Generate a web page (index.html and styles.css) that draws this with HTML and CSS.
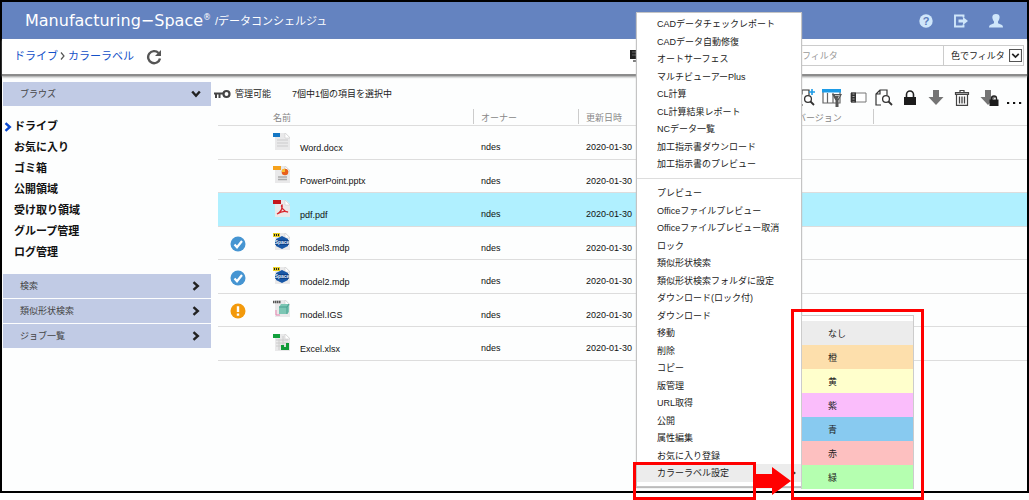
FILE: index.html
```html
<!DOCTYPE html>
<html lang="ja">
<head>
<meta charset="utf-8">
<title>Manufacturing−Space データコンシェルジュ</title>
<link rel="stylesheet" href="styles.css">
</head>
<body>
<svg class="defs" aria-hidden="true">
  <symbol id="page" viewBox="0 0 18 18">
    <path d="M2 1h11l4 4v13H2z" fill="#e9e9ea"/>
    <path d="M12 1v5h5z" fill="#fff" stroke="#cfcfcf" stroke-width=".6"/>
  </symbol>
  <symbol id="chev" viewBox="0 0 8 10"><path d="M1.5 1.2 5.8 5 1.5 8.8" fill="none" stroke="currentColor" stroke-width="2.4"/></symbol>
  <symbol id="mdp" viewBox="0 0 18 18">
    <use href="#page"/>
    <path d="M0 1h7v4H0z" fill="#e8cf20"/><path d="M1 3h1M3 3h1M5 3h1" stroke="#222" stroke-width="2"/>
    <path d="m9 4 6 3v7l-6 3-6-3V7z" fill="#1757a6"/>
    <path d="M2 10.5h14" stroke="#0b3b80" stroke-width="4.500"/>
    <text x="9" y="12" text-anchor="middle" font-size="5" font-weight="bold" fill="#e4f0ff">Space</text>
  </symbol>
  <symbol id="ok" viewBox="0 0 16 16">
    <circle cx="8" cy="8" r="7.500" fill="#4695d2"/><path d="m4.500 8.500 2.500 2.700 5-6.200" fill="none" stroke="#fff" stroke-width="2.200"/>
  </symbol>
  <symbol id="arrow" viewBox="0 0 18 18"><path d="M6 1h6v7h4.500L9 16 1.500 8H6z" fill="#757575"/></symbol>
  <symbol id="lock" viewBox="0 0 18 18"><path d="M5.500 8V5.500a3.500 3.500 0 0 1 7 0V8" fill="none" stroke="#222" stroke-width="1.600"/><path d="M3 8h12v8H3z" fill="#1c1c1c"/></symbol>
  <symbol id="docsearch" viewBox="0 0 18 18">
    <path d="M6 16H1V5l4-4h7v5M5 1v4H1" fill="none" stroke="#333" stroke-width="1.200"/>
    <circle cx="11" cy="10" r="3.400" fill="#fff" stroke="#333" stroke-width="1.300"/><path d="m13.500 12.500 3.500 3.500" stroke="#333" stroke-width="1.800"/>
  </symbol>
</svg>

<div class="frame">
  <header class="top">
    <h1 class="brand">Manufacturing−Space<sup>®</sup></h1>
    <span class="product">/データコンシェルジュ</span>
    <nav class="top-actions">
      <button type="button" aria-label="ヘルプ"><svg viewBox="0 0 14 14"><circle cx="7" cy="7" r="6.700" fill="#cfe6fa"/><text x="7" y="11" text-anchor="middle" font-size="11" font-weight="bold" fill="#5b7cba">?</text></svg></button>
      <button type="button" aria-label="ログアウト"><svg viewBox="0 0 14 14"><path d="M9.500 3.500V1.500H1v11h8.500v-2" fill="none" stroke="#cfe6fa" stroke-width="1.900"/><path d="M4.500 5.500H9V3l5 4-5 4V8.500H4.500z" fill="#cfe6fa"/></svg></button>
      <button type="button" aria-label="ユーザー"><svg viewBox="0 0 14 14"><path d="M7 0c5 0 4 5 2 7.500v1.700L13 11q1 .6 1 2.500H0Q0 11.600 1 11l4-1.800V7.500C3 5 2 0 7 0z" fill="#cfe6fa"/></svg></button>
    </nav>
  </header>

  <div class="pathbar">
    <nav class="crumbs"><a href="#">ドライブ</a><svg viewBox="0 0 8 10"><path d="m2 1.500 3 3.500-3 3.500" fill="none" stroke="#555" stroke-width="1.200"/></svg><a href="#">カラーラベル</a></nav>
    <button class="reload" type="button" aria-label="更新"><svg viewBox="0 0 16 16"><path d="M12.500 4A6 6 0 1 0 14 9.500" fill="none" stroke="#555" stroke-width="2.400"/><path d="M15 1v6H9z" fill="#555"/></svg></button>
    <div class="filters">
      <button class="view" type="button" aria-label="表示"><svg viewBox="0 0 16 14"><path d="M0 1h16v9H0z" fill="#222"/><path d="M2 3h12M2 6h12" stroke="#666"/><path d="M3 12h10" stroke="#555" stroke-width="1.500"/></svg></button>
      <div class="filter-box">
        <input type="text" placeholder="フィルタ" aria-label="フィルタ">
        <span class="colour-filter"><select aria-label="色でフィルタ"><option>色でフィルタ</option></select><svg viewBox="0 0 12 12"><path d="M.5.500h11v11H.5z" fill="#fff" stroke="#555"/><path d="m3 4.500 3 3 3-3" fill="none" stroke="#222" stroke-width="1.600"/></svg></span>
      </div>
    </div>
  </div>

  <div class="body">
    <aside class="side">
      <button class="section" type="button">ブラウズ<svg class="down"><use href="#chev"/></svg></button>
      <ul class="browse">
        <li><svg class="here"><use href="#chev"/></svg><a href="#">ドライブ</a></li>
        <li><a href="#">お気に入り</a></li>
        <li><a href="#">ゴミ箱</a></li>
        <li><a href="#">公開領域</a></li>
        <li><a href="#">受け取り領域</a></li>
        <li><a href="#">グループ管理</a></li>
        <li><a href="#">ログ管理</a></li>
      </ul>
      <div class="sections">
        <button class="section" type="button">検索<svg><use href="#chev"/></svg></button>
        <button class="section" type="button">類似形状検索<svg><use href="#chev"/></svg></button>
        <button class="section" type="button">ジョブ一覧<svg><use href="#chev"/></svg></button>
      </div>
    </aside>

    <main class="main">
      <div class="tools">
        <svg class="key" viewBox="0 0 17 10"><circle cx="12.500" cy="5" r="3" fill="none" stroke="#444" stroke-width="2.200"/><path d="M0 4.500h10M2 4.500V9M5.500 4.500V9" stroke="#444" stroke-width="2"/></svg>
        <span class="perm">管理可能</span>
        <span class="count">7個中1個の項目を選択中</span>
        <div class="icons">
          <button type="button" aria-label="検索追加"><svg><use href="#docsearch"/><path d="M12 3h6M15 0v6" stroke="#1c9be6" stroke-width="1.600"/></svg></button>
          <button type="button" aria-label="列フィルタ"><svg class="wide" viewBox="0 0 22 18"><path d="M2 2h17v12H2zM6.500 4v10M12 4v10" fill="#fff" stroke="#666" stroke-width="1.200"/><path d="M1 0h19v3.500H1z" fill="#1c9be6"/><path d="M11 5h10l-3.500 6.500V18h-3v-6.500z" fill="#555"/><path d="M14 6.500h4.500l-1.500 3" fill="none" stroke="#bbb"/></svg></button>
          <button type="button" aria-label="パネル"><svg><path d="M2 4h15v9H2z" fill="#fff" stroke="#777"/><path d="M2 3.500h5v10H2z" fill="#333"/><path d="M4.500 4.500v8" stroke="#aaa" stroke-dasharray="1 1.500" stroke-width="2"/></svg></button>
          <button type="button" aria-label="プレビュー"><svg><use href="#docsearch"/></svg></button>
          <button type="button" aria-label="ロック"><svg><use href="#lock"/></svg></button>
          <button type="button" aria-label="ダウンロード"><svg><use href="#arrow"/></svg></button>
          <button type="button" aria-label="削除"><svg><path d="M3.500 5h11v11.400h-11zM2.500 3.500h13v1.800h-13zM7 3.500V1.500h4v2" fill="#fff" stroke="#444" stroke-width="1.200"/><path d="M6.500 7.500v7M9 7.500v7M11.500 7.500v7" stroke="#444" stroke-width="1.300"/></svg></button>
          <button type="button" aria-label="ロック付ダウンロード"><svg class="wide" viewBox="-2 0 22 18"><use href="#arrow" width="18" height="18"/><path d="M12.500 11V9.500a2.500 2.500 0 0 1 5 0V11" fill="none" stroke="#222" stroke-width="1.400"/><path d="M10.500 10.500h9V17h-9z" fill="#1c1c1c"/></svg></button>
          <button type="button" aria-label="その他"><svg><path d="M2 14h2.200M8 14h2.200M14 14h2.200" stroke="#111" stroke-width="2"/></svg></button>
        </div>
      </div>

      <table class="files">
        <colgroup><col class="c-state"><col class="c-name"><col class="c-owner"><col class="c-date"><col class="c-ver"><col></colgroup>
        <thead><tr><th></th><th>名前</th><th class="sep">オーナー</th><th class="sep">更新日時</th><th class="sep">バージョン</th><th class="sep"></th></tr></thead>
        <tbody>
          <tr><td></td><td><div class="file"><svg><use href="#page"/><path d="M0 1h7v4H0z" fill="#1477c4"/><path d="M4 8h11M4 11h11M4 14h11" stroke="#ccc" stroke-width="1.200"/></svg>Word.docx</div></td><td>ndes</td><td>2020-01-30</td><td></td><td></td></tr>
          <tr><td></td><td><div class="file"><svg><use href="#page"/><path d="M0 1h8v4H0z" fill="#f6a21c"/><circle cx="12" cy="7" r="3.300" fill="#e8601c"/><path d="M12 7V3.700A3.300 3.300 0 0 0 8.700 7z" fill="#f8c030"/><path d="M5 12h9M5 14.500h9" stroke="#aaa" stroke-width="1.400"/></svg>PowerPoint.pptx</div></td><td>ndes</td><td>2020-01-30</td><td></td><td></td></tr>
          <tr class="selected"><td></td><td><div class="file"><svg><use href="#page"/><path d="M0 1h8v4H0z" fill="#c4161c"/><path d="M4 15c4-2 6-6 5-9-2 1 2 7 6 7-4-1.500-8 0-11 2z" fill="none" stroke="#d8262c" stroke-width="1.300"/></svg>pdf.pdf</div></td><td>ndes</td><td>2020-01-30</td><td></td><td></td></tr>
          <tr><td><svg class="state" role="img" aria-label="完了"><use href="#ok"/></svg></td><td><div class="file"><svg><use href="#mdp"/></svg>model3.mdp</div></td><td>ndes</td><td>2020-01-30</td><td></td><td></td></tr>
          <tr><td><svg class="state" role="img" aria-label="完了"><use href="#ok"/></svg></td><td><div class="file"><svg><use href="#mdp"/></svg>model2.mdp</div></td><td>ndes</td><td>2020-01-30</td><td></td><td></td></tr>
          <tr><td><svg class="state" role="img" aria-label="警告" viewBox="0 0 16 16"><circle cx="8" cy="8" r="7.500" fill="#f39a0c"/><path d="M8 3.200V9M8 10.500v2.200" stroke="#fff" stroke-width="2.400"/></svg></td><td><div class="file"><svg><use href="#page"/><path d="M0 3h8" stroke="#555" stroke-width="2.500" stroke-dasharray="1.500 .5"/><path d="M6 8l2-3h8v8l-2 2H6z" fill="#7cc6b4"/><path d="M6 8h8v7M14 8l2-3" fill="none" stroke="#48a090"/><path d="M3 11v5h4" fill="none" stroke="#e884b0"/></svg>model.IGS</div></td><td>ndes</td><td>2020-01-30</td><td></td><td></td></tr>
          <tr><td></td><td><div class="file"><svg><use href="#page"/><path d="M0 1h7v4H0z" fill="#12a03c"/><path d="M3 7h12M3 10h12M3 13h12M6 6v11M10 3v14" stroke="#ccc"/><path d="M8 17v-5h3v2h2v-4h3v7z" fill="#109a38"/></svg>Excel.xlsx</div></td><td>ndes</td><td>2020-01-30</td><td></td><td></td></tr>
        </tbody>
      </table>
    </main>
  </div>
</div>

<div class="menu" role="menu">
  <div class="group">
    <button type="button" role="menuitem">CADデータチェックレポート</button>
    <button type="button" role="menuitem">CADデータ自動修復</button>
    <button type="button" role="menuitem">オートサーフェス</button>
    <button type="button" role="menuitem">マルチビューアーPlus</button>
    <button type="button" role="menuitem">CL計算</button>
    <button type="button" role="menuitem">CL計算結果レポート</button>
    <button type="button" role="menuitem">NCデータ一覧</button>
    <button type="button" role="menuitem">加工指示書ダウンロード</button>
    <button type="button" role="menuitem">加工指示書のプレビュー</button>
  </div>
  <hr>
  <div class="group">
    <button type="button" role="menuitem">プレビュー</button>
    <button type="button" role="menuitem">Officeファイルプレビュー</button>
    <button type="button" role="menuitem">Officeファイルプレビュー取消</button>
    <button type="button" role="menuitem">ロック</button>
    <button type="button" role="menuitem">類似形状検索</button>
    <button type="button" role="menuitem">類似形状検索フォルダに設定</button>
    <button type="button" role="menuitem">ダウンロード(ロック付)</button>
    <button type="button" role="menuitem">ダウンロード</button>
    <button type="button" role="menuitem">移動</button>
    <button type="button" role="menuitem">削除</button>
    <button type="button" role="menuitem">コピー</button>
    <button type="button" role="menuitem">版管理</button>
    <button type="button" role="menuitem">URL取得</button>
    <button type="button" role="menuitem">公開</button>
    <button type="button" role="menuitem">属性編集</button>
    <button type="button" role="menuitem">お気に入り登録</button>
    <button type="button" role="menuitem" class="active">カラーラベル設定<svg viewBox="0 0 4 6"><path d="m0 0 4 3-4 3z" fill="#333"/></svg></button>
  </div>
</div>

<div class="submenu" role="menu">
  <button type="button" role="menuitem" class="none">なし</button>
  <button type="button" role="menuitem" class="orange">橙</button>
  <button type="button" role="menuitem" class="yellow">黄</button>
  <button type="button" role="menuitem" class="purple">紫</button>
  <button type="button" role="menuitem" class="blue">青</button>
  <button type="button" role="menuitem" class="red">赤</button>
  <button type="button" role="menuitem" class="green">緑</button>
</div>

<div class="mark mark-item"></div>
<svg class="mark-arrow" viewBox="0 0 36 28"><path d="M0 7h17V0l19 14-19 14v-7H0z" fill="#f00"/></svg>
<div class="mark mark-colours"></div>
</body>
</html>
```
FILE: styles.css
```css
* { box-sizing: border-box; }
body {
  margin: 0;
  min-height: 100vh;
  position: relative;
  background: #fff;
  color: #222;
  font: 9px/14px "Liberation Sans", "Noto Sans CJK JP", sans-serif;
}
button, input, select { font: inherit; color: inherit; background: none; border: 0; padding: 0; margin: 0; }
button { text-align: left; }
a { color: inherit; text-decoration: none; }
svg { display: block; flex: none; }
.defs { position: absolute; width: 0; height: 0; }

.frame { min-height: calc(100vh - 7px); border: 2px solid #000; background: #fdfefe; }

.top { display: flex; align-items: center; height: 37px; padding: 0 24px 0 23px; background: #6483c0; color: #fff; }
.brand { margin: 0; font: 16px/20px "DejaVu Sans", sans-serif; }
.brand sup { font-size: 8px; line-height: 0; vertical-align: 6px; }
.product { margin-left: 4px; font-size: 11px; line-height: 20px; }
.top-actions { display: flex; gap: 21px; margin-left: auto; }
.top-actions svg { width: 14px; height: 14px; }

.pathbar {
  display: flex; align-items: center; height: 37px; padding: 0 3px 2px 12px;
  background: #fff; border-bottom: 2px solid #8c8c8c; box-shadow: 0 1px 2px #999;
}
.crumbs { display: flex; align-items: center; gap: 1px; font-size: 11px; color: #1450c8; }
.crumbs svg { width: 8px; height: 10px; }
.reload { margin: 2px 0 0 12px; }
.reload svg { width: 16px; height: 16px; }
.filters { display: flex; align-items: center; gap: 145px; margin-left: auto; }
.view svg { width: 16px; height: 14px; }
.filter-box { display: flex; height: 21px; border: 1px solid #ccc; }
.filter-box input { width: 151px; padding-left: 10px; }
.filter-box input::placeholder { color: #999; opacity: 1; }
.colour-filter { display: flex; align-items: center; width: 80px; padding-left: 7px; border-left: 1px solid #ccc; position: relative; }
.colour-filter select { appearance: none; width: 100%; height: 100%; }
.colour-filter svg { position: absolute; right: 1px; width: 13px; height: 13px; pointer-events: none; }

.body { display: flex; }
.side { width: 208px; margin: 6px 0 0 1px; flex: none; }
.section {
  display: flex; align-items: center; justify-content: space-between;
  width: 100%; height: 24px; padding: 0 11px 0 17px; background: #c1cbe5; color: #444;
}
.section svg { width: 8px; height: 10px; color: #222; }
.section .down { transform: rotate(90deg); }
.browse { list-style: none; margin: 10px 0 11px; padding: 0 0 0 11px; font-size: 11px; font-weight: bold; color: #111; }
.browse li { height: 21px; line-height: 21px; position: relative; }
.browse .here { position: absolute; left: -10px; top: 6px; width: 8px; height: 10px; color: #0a48d0; }
.sections { display: grid; gap: 1px; }

.main { flex: 1; min-width: 0; margin-top: 6px; }
.tools { display: flex; align-items: center; height: 27px; padding: 0 0 3px 3px; }
.key { width: 17px; height: 10px; }
.perm { margin-left: 4px; white-space: nowrap; }
.count { margin-left: 21px; white-space: nowrap; }
.icons { display: flex; margin: 8px 0 0 auto; }
.icons button { display: flex; justify-content: center; width: 26px; }
.icons svg { width: 18px; height: 18px; }
.icons .wide { width: 22px; }

.files { width: calc(100% - 7px); margin-left: 7px; table-layout: fixed; border-collapse: separate; border-spacing: 0; }
.c-state { width: 55px; }
.c-name { width: 200px; }
.c-owner { width: 105px; }
.c-date { width: 211px; }
.c-ver { width: 84px; }
.files th { height: 17px; padding: 3px 0 0; border-bottom: 1px solid #ddd; text-align: left; font-weight: normal; line-height: 13px; color: #888; }
.files th.sep { padding-left: 8px; background: linear-gradient(#ccc, #ccc) no-repeat left top / 1px 15px; }
.files td { height: 34px; padding: 9px 0 0 8px; border-bottom: 1px solid #ddd; line-height: 14px; color: #111; }
.files tr:nth-child(even) td { height: 33px; }
.files td:first-child { padding: 2px 0 0 12px; }
.files td:nth-child(2) { padding: 1px 0 0; }
.files .selected td { background: #b0f0ff; }
.file { display: flex; align-items: flex-end; gap: 9px; }
.file svg { width: 18px; height: 18px; margin-bottom: 5px; }
.state { width: 16px; height: 16px; }

.menu {
  position: absolute; left: 636px; top: 12px; width: 166px; padding: 2px 0 4px;
  background: #fff; border: 1px solid #c4c4c4; box-shadow: 0 1px 1px #bbb;
}
.group { display: grid; grid-auto-rows: 18px 17px; }
.group button { padding-left: 20px; }
.group .active { display: flex; align-items: center; justify-content: space-between; padding-right: 5px; background: #ececec; }
.active svg { width: 4px; height: 6px; }
.menu hr { margin: 5px 0; border: 0; border-top: 1px solid #ddd; }

.submenu {
  position: absolute; left: 801px; top: 315px; width: 113px; padding-top: 5px;
  display: grid; grid-auto-rows: 24px;
  background: #fff; border: 1px solid #ccc; border-bottom: 0;
}
.submenu button { padding: 1px 0 0 26px; }
.none { background: #ececec; }
.orange { background: #fddfac; }
.yellow { background: #ffffcc; }
.purple { background: #fabdfb; }
.blue { background: #88caf0; }
.red { background: #fdc0c0; }
.green { background: #b5ffb0; }

.mark { position: absolute; border: 3px solid #f00; pointer-events: none; }
.mark-item { left: 633px; top: 462px; width: 123px; height: 38px; }
.mark-colours { left: 791px; top: 309px; width: 133px; height: 191px; }
.mark-arrow { position: absolute; left: 755px; top: 467px; width: 36px; height: 28px; }
```
